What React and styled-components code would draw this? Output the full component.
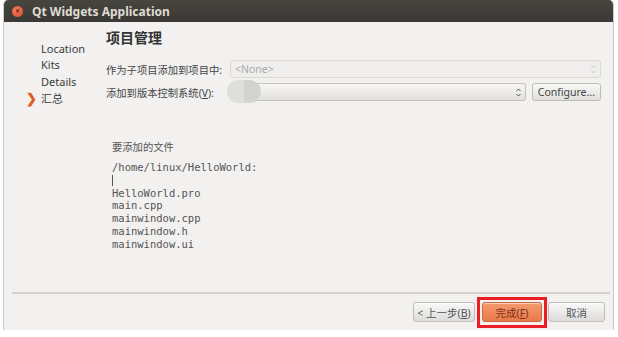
import React from "react";
import styled, { createGlobalStyle } from "styled-components";

const Global = createGlobalStyle`
  *, *::before, *::after {
    box-sizing: border-box;
  }
  html, body {
    margin: 0;
    padding: 0;
    background: #ffffff;
  }
  body {
    font-family: "Noto Sans", "Noto Sans CJK SC", sans-serif;
    -webkit-font-smoothing: antialiased;
  }
`;

const Page = styled.div`
  width: 618px;
  height: 337px;
  background: #fff;
  padding-left: 3px;
`;

const Window = styled.div`
  width: 611px;
  height: 330px;
  display: flex;
  flex-direction: column;
  background: #f2f1f0;
  border-left: 1px solid #c9c7c3;
  border-right: 1px solid #c9c7c3;
  border-radius: 5px 5px 0 0;
  overflow: hidden;
`;

const TitleBar = styled.div`
  height: 22px;
  flex: none;
  display: flex;
  align-items: center;
  gap: 9px;
  padding-left: 8px;
  background: linear-gradient(#46453f, #3a3935);
  color: #dfdbd2;
  font-size: 12px;
  font-weight: 700;
`;

const CloseBtn = styled.span`
  width: 11px;
  height: 11px;
  border-radius: 50%;
  background: radial-gradient(circle at 40% 35%, #f4805e, #d9492a);
  display: flex;
  align-items: center;
  justify-content: center;
  color: #5a1f10;
  font-size: 8px;
  line-height: 1;
`;

const Main = styled.div`
  flex: 1;
  display: flex;
`;

const Nav = styled.ul`
  list-style: none;
  margin: 0;
  padding: 19px 0 0 22px;
  width: 102px;
  flex: none;
  display: flex;
  flex-direction: column;
  gap: 2px;
`;

const NavItem = styled.li`
  height: 14.5px;
  display: flex;
  align-items: center;
  font-size: 11px;
  color: #3c3c3c;
`;

const Arrow = styled.span`
  width: 15px;
  color: ${(p) => (p.$on ? "#e05a1e" : "transparent")};
  font-weight: 700;
  font-size: 13px;
`;

const Content = styled.div`
  flex: 1;
  padding: 7px 12px 0 0;
  display: flex;
  flex-direction: column;
`;

const Heading = styled.h1`
  margin: 0 0 13px;
  font-size: 14px;
  font-weight: 700;
  color: #333;
  line-height: 18px;
`;

const Row = styled.div`
  display: flex;
  align-items: center;
  height: 18px;
  margin-bottom: 5px;
  font-size: 10.3px;
  color: #444;
`;

const Label = styled.span`
  width: 124px;
  flex: none;
  white-space: nowrap;
`;

const Combo = styled.div`
  position: relative;
  flex: 1;
  height: 18px;
  border: 1px solid ${(p) => (p.$disabled ? "#dbd9d5" : "#c3c1bd")};
  border-radius: 3px;
  background: ${(p) =>
    p.$disabled ? "#efeeed" : "linear-gradient(#f7f6f5, #e2e1df)"};
  display: flex;
  align-items: center;
  justify-content: space-between;
  padding: 0 4px;
  font-size: 10.5px;
  color: #aaa;
`;

const Blob = styled.span`
  position: absolute;
  left: -4px;
  top: -4px;
  width: 34px;
  height: 23px;
  border-radius: 12px;
  background: linear-gradient(90deg, #dededc 50%, #d3d3d1 50%);
`;

const Button = styled.button`
  height: 18px;
  margin-left: 6px;
  padding: 0 5px;
  border: 1px solid #bebcb8;
  border-radius: 3px;
  background: linear-gradient(#f8f8f7, #e0dfdd);
  font-family: inherit;
  font-size: 10.5px;
  color: #444;
`;

const Files = styled.div`
  margin: 34px 0 0 6px;
  color: #555;
`;

const FilesTitle = styled.div`
  font-size: 10.3px;
  line-height: 14px;
  margin-bottom: 7px;
`;

const Mono = styled.pre`
  margin: 0;
  font-family: "DejaVu Sans Mono", monospace;
  font-size: 10.5px;
  line-height: 12.8px;
  color: #555;
`;

const Caret = styled.span`
  display: inline-block;
  width: 1px;
  height: 11px;
  background: #555;
  vertical-align: middle;
`;

const Footer = styled.div`
  flex: none;
  height: 38px;
  margin: 0 3px 0 8px;
  border-top: 2px solid #d4d2ce;
  display: flex;
  justify-content: flex-end;
  align-items: flex-start;
  padding: 8px 5px 0 0;
`;

const FootBtn = styled.button`
  height: 20px;
  width: ${(p) => p.$w}px;
  border: 1px solid ${(p) => (p.$primary ? "#c9683e" : "#c0beba")};
  border-radius: 3px;
  background: ${(p) =>
    p.$primary
      ? "linear-gradient(#f49a70, #e9784a)"
      : "linear-gradient(#f8f8f7, #dedddb)"};
  font-family: inherit;
  font-size: 10.5px;
  color: ${(p) => (p.$primary ? "#7a3416" : "#555")};
  padding: 0;
  box-shadow: inset 0 1px 0 rgba(255, 255, 255, 0.5);
`;

const Highlight = styled.span`
  margin: -5px 1px 0 2px;
  padding: 2px 2px 3px;
  border: 3px solid #ec1c24;
  display: flex;
`;

function Spinner({ dim }) {
  const c = dim ? "#c8c8c8" : "#555";
  return (
    <svg width="5" height="9" viewBox="0 0 5 9">
      <path d="M0.5 3 L2.5 1 L4.5 3" fill="none" stroke={c} strokeWidth="1" />
      <path d="M0.5 6 L2.5 8 L4.5 6" fill="none" stroke={c} strokeWidth="1" />
    </svg>
  );
}

const u = (s) => <span style={{ textDecoration: "underline" }}>{s}</span>;

export default function App() {
  return (
    <Page>
      <Global />
      <Window>
        <TitleBar>
          <CloseBtn>×</CloseBtn>
          Qt Widgets Application
        </TitleBar>
        <Main>
          <Nav>
            {["Location", "Kits", "Details", "汇总"].map((t, i) => (
              <NavItem key={t}>
                <Arrow $on={i === 3}>❯</Arrow>
                {t}
              </NavItem>
            ))}
          </Nav>
          <Content>
            <Heading>项目管理</Heading>
            <Row>
              <Label>作为子项目添加到项目中:</Label>
              <Combo $disabled>
                &lt;None&gt;
                <Spinner dim />
              </Combo>
            </Row>
            <Row>
              <Label>添加到版本控制系统({u("V")}):</Label>
              <Combo>
                <Blob />
                <span />
                <Spinner />
              </Combo>
              <Button>Configure...</Button>
            </Row>
            <Files>
              <FilesTitle>要添加的文件</FilesTitle>
              <Mono>
                {"/home/linux/HelloWorld:\n"}
                <Caret />
                {"\nHelloWorld.pro\nmain.cpp\nmainwindow.cpp\nmainwindow.h\nmainwindow.ui"}
              </Mono>
            </Files>
          </Content>
        </Main>
        <Footer>
          <FootBtn $w={62}>&lt; 上一步({u("B")})</FootBtn>
          <Highlight>
            <FootBtn $w={60} $primary>
              完成({u("F")})
            </FootBtn>
          </Highlight>
          <FootBtn $w={57}>取消</FootBtn>
        </Footer>
      </Window>
    </Page>
  );
}
